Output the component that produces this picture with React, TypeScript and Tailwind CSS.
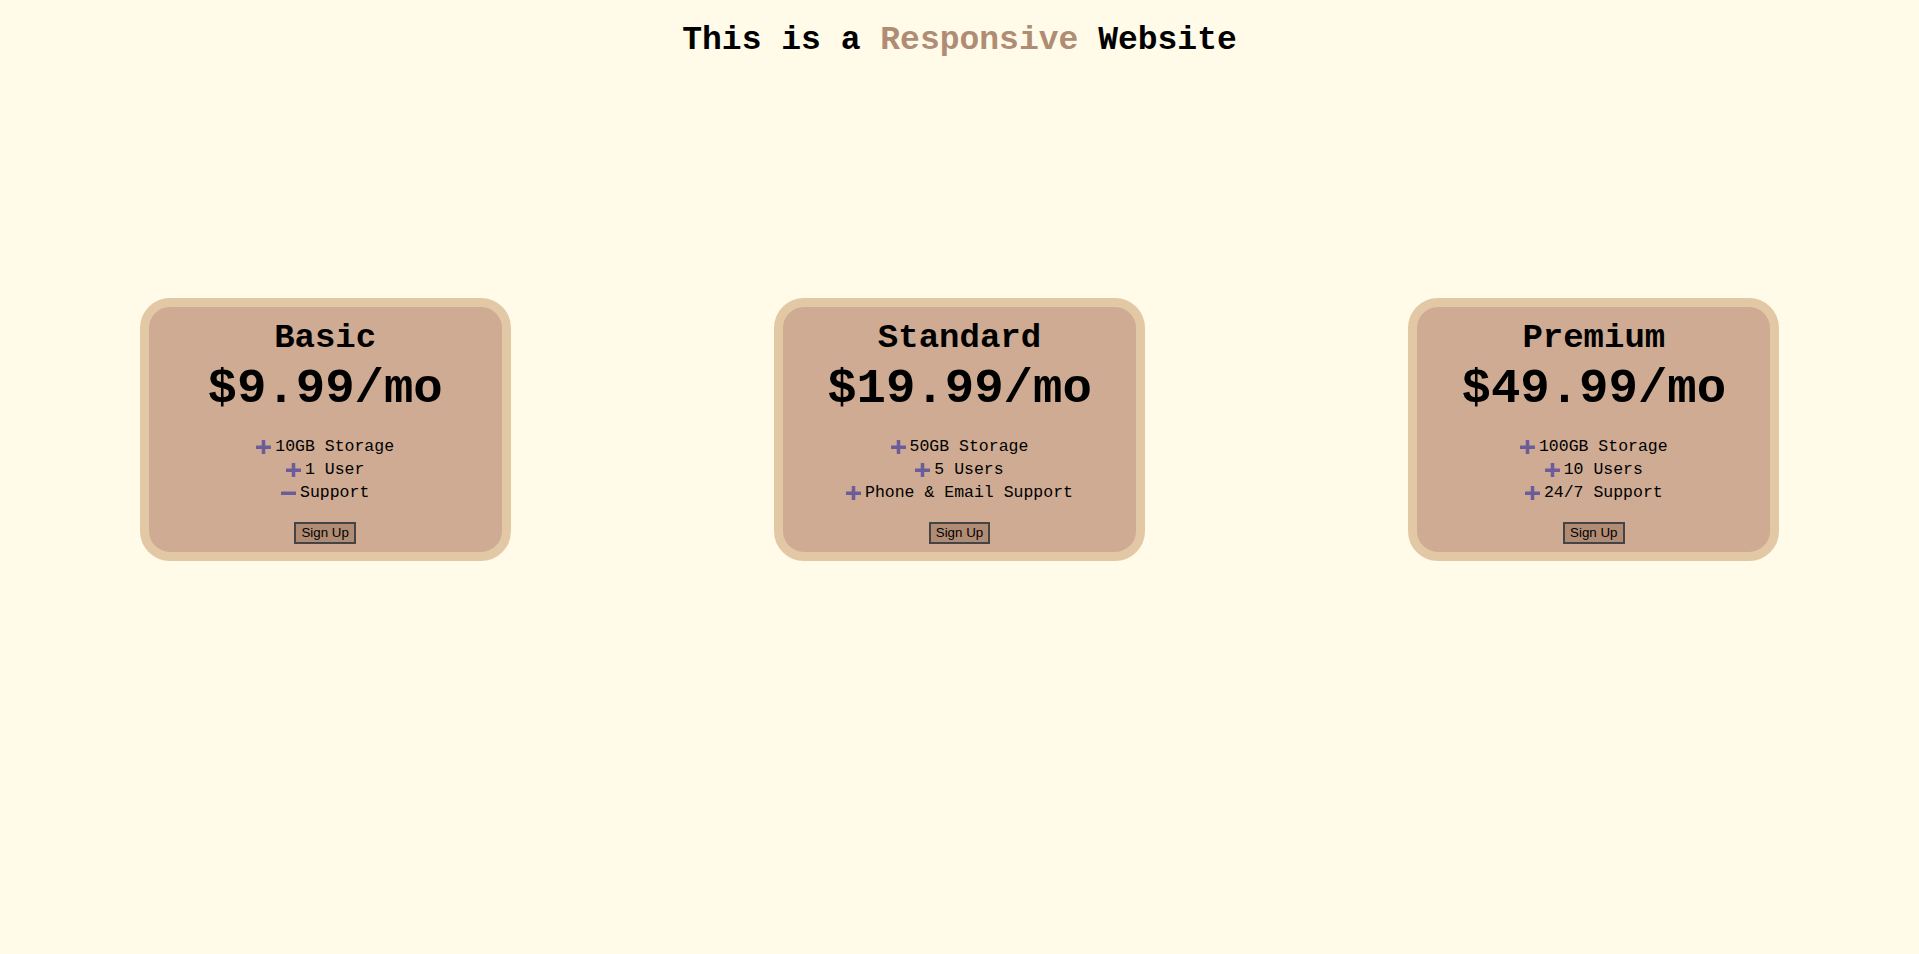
import React from 'react'

type Feature = { text: string; included: boolean }

type Plan = { name: string; price: string; features: Feature[] }

const plans: Plan[] = [
  {
    name: 'Basic',
    price: '$9.99/mo',
    features: [
      { text: '10GB Storage', included: true },
      { text: '1 User', included: true },
      { text: 'Support', included: false },
    ],
  },
  {
    name: 'Standard',
    price: '$19.99/mo',
    features: [
      { text: '50GB Storage', included: true },
      { text: '5 Users', included: true },
      { text: 'Phone & Email Support', included: true },
    ],
  },
  {
    name: 'Premium',
    price: '$49.99/mo',
    features: [
      { text: '100GB Storage', included: true },
      { text: '10 Users', included: true },
      { text: '24/7 Support', included: true },
    ],
  },
]

const PlusIcon = () => (
  <svg width="16" height="14" viewBox="0 0 16 14" className="shrink-0">
    <rect x="0" y="5.5" width="15" height="3.5" rx="0.6" fill="#6a5d9a" />
    <rect x="5.75" y="0" width="3.5" height="14" rx="0.6" fill="#6a5d9a" />
  </svg>
)

const MinusIcon = () => (
  <svg width="16" height="14" viewBox="0 0 16 14" className="shrink-0">
    <rect x="0" y="5.5" width="15" height="3.5" rx="0.6" fill="#6a5d9a" />
  </svg>
)

function PlanCard({ plan }: { plan: Plan }) {
  return (
    <div className="w-[371px] rounded-[30px] border-[9px] border-[#e2c8a5] bg-[#ceab92] px-4 pt-[11px] pb-[8px] flex flex-col items-center text-black">
      <h2 className="text-[34px] leading-[40px] font-bold">{plan.name}</h2>
      <div className="mt-[3px] text-[49px] leading-[56px] font-bold">{plan.price}</div>
      <ul className="mt-[18px] flex flex-col items-center text-[16.5px] leading-[23px]">
        {plan.features.map((f) => (
          <li key={f.text} className="flex items-center gap-[3px]">
            {f.included ? <PlusIcon /> : <MinusIcon />}
            <span>{f.text}</span>
          </li>
        ))}
      </ul>
      <button className="mt-[18px] h-[22px] px-[5px] border-2 border-[#444] bg-[#b08c74] text-[13.33px] leading-none text-black font-['Liberation_Sans',Arial,sans-serif]">
        Sign Up
      </button>
    </div>
  )
}

export default function App() {
  return (
    <div className="min-h-[954px] bg-[#fffbe8] font-['Liberation_Mono','DejaVu_Sans_Mono',monospace] px-2">
      <h1 className="pt-[21px] text-center text-[33px] leading-[40px] font-bold text-black">
        This is a <span className="text-[#b08c74]">Responsive</span> Website
      </h1>
      <div className="mt-[237px] grid grid-cols-3 justify-items-center">
        {plans.map((p) => (
          <PlanCard key={p.name} plan={p} />
        ))}
      </div>
    </div>
  )
}
